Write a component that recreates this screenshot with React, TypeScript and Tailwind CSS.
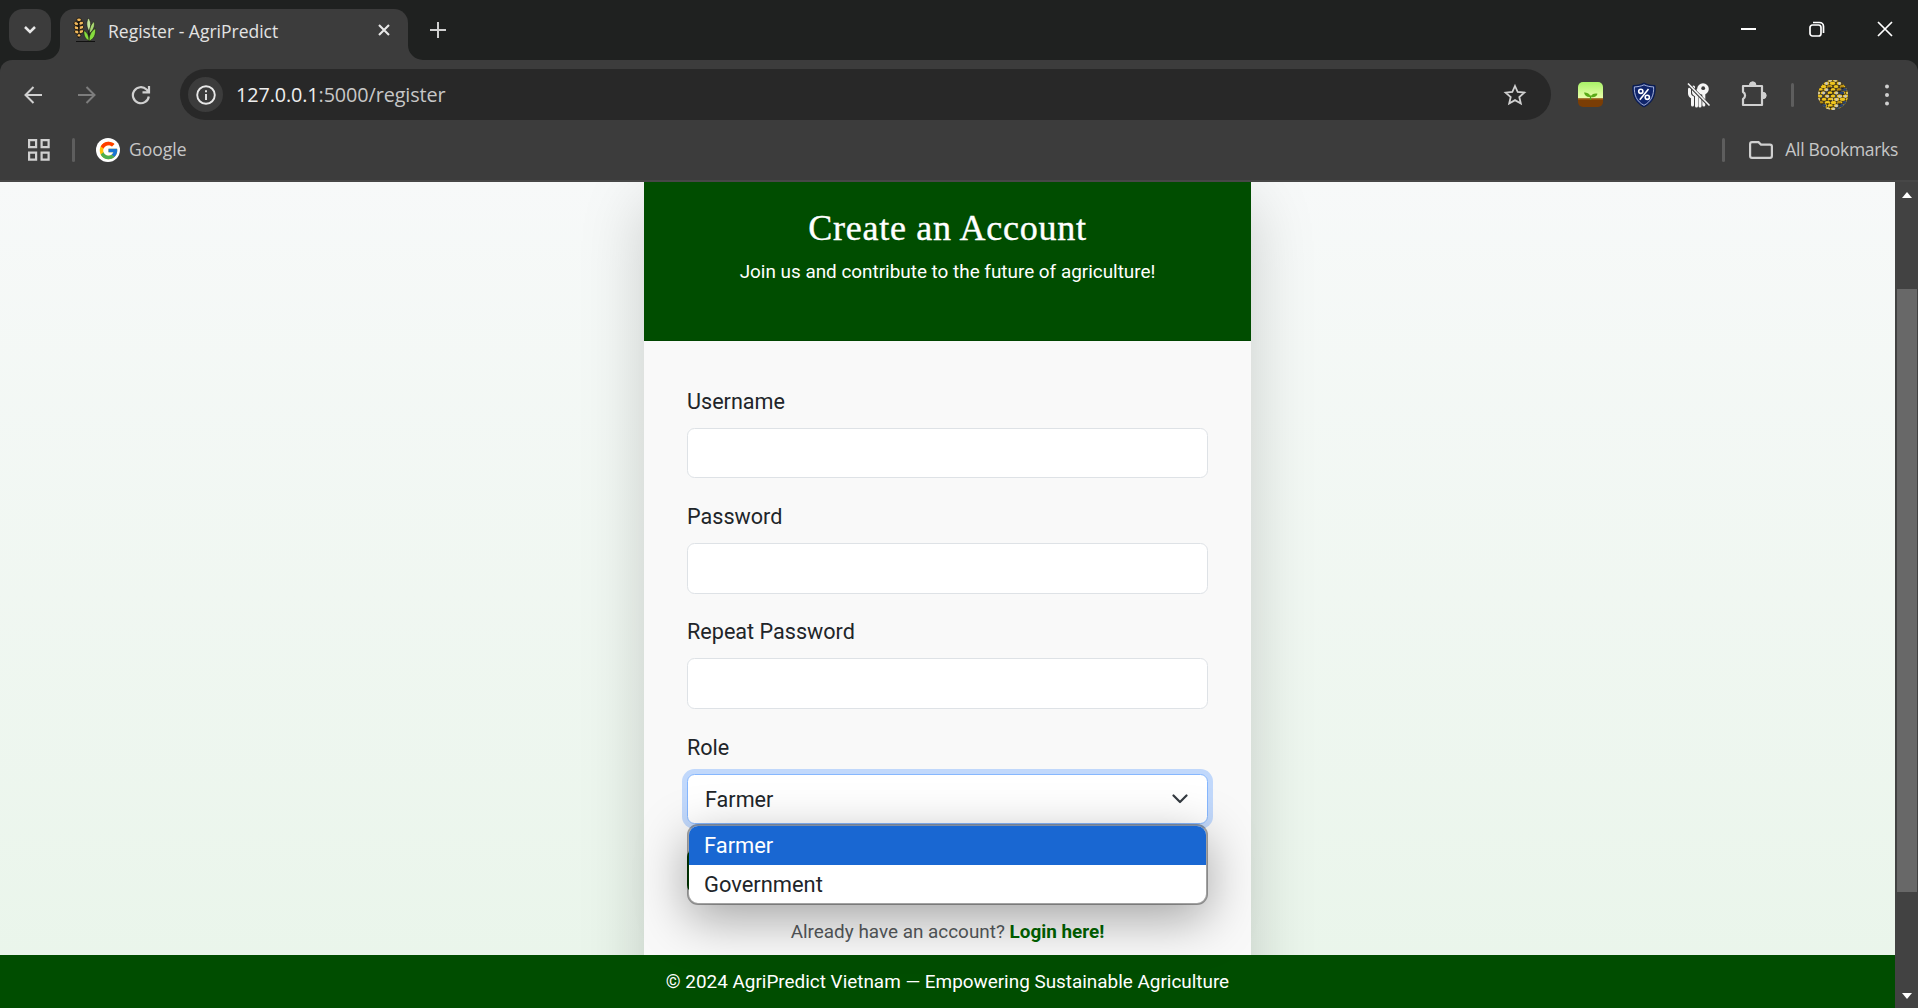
import React from "react";
import { FcGoogle } from "react-icons/fc";

const UI = "font-['Open_Sans','Noto_Sans',sans-serif]";

function Wheat() {
  return (
    <svg width="24" height="26" viewBox="0 0 24 26" className="shrink-0">
      <path d="M5.500 3v18M16 3v20M3 24.500h19" stroke="#111" strokeWidth="1.2" fill="none" />
      <g fill="#f2b95c" stroke="#15120c" strokeWidth="0.800">
        <ellipse cx="6" cy="2.800" rx="2.300" ry="1.800" />
        <ellipse cx="3.200" cy="6.600" rx="2.400" ry="1.800" transform="rotate(25 3.200 6.600)" />
        <ellipse cx="8.200" cy="6.200" rx="2.400" ry="1.800" transform="rotate(-25 8.200 6.200)" />
        <ellipse cx="3.400" cy="10.800" rx="2.400" ry="1.800" transform="rotate(25 3.400 10.800)" />
        <ellipse cx="8.400" cy="10.400" rx="2.400" ry="1.800" transform="rotate(-25 8.400 10.400)" />
        <ellipse cx="3.800" cy="15" rx="2.400" ry="1.800" transform="rotate(25 3.800 15)" />
        <ellipse cx="8.300" cy="14.600" rx="2.400" ry="1.800" transform="rotate(-25 8.300 14.600)" />
        <ellipse cx="6" cy="18.400" rx="1.800" ry="1.700" />
      </g>
      <g stroke="#15120c" strokeWidth="0.500">
        <path d="M15.500 1c3 4 2.500 9 .5 13-2.500-4-3-9-.5-13z" fill="#c4e59a" />
        <path d="M21 4.500c1.500 4.500-1 9-4.500 12 0-4.500 1-9 4.500-12z" fill="#a9d873" />
        <path d="M22.500 11.500c.5 6.500-2 11-6.500 12.500 0-5.500 2-10 6.500-12.500z" fill="#86dc3e" />
        <path d="M11 13.500c3.500 2 5 5.500 5 10-3.500-1-5.500-5-5-10z" fill="#86dc3e" />
      </g>
    </svg>
  );
}

function Sprout() {
  return (
    <svg width="25" height="25" viewBox="0 0 25 25" className="shrink-0">
      <defs>
        <linearGradient id="sky" x1="0" y1="0" x2="0" y2="1">
          <stop offset="0" stopColor="#a9f268" />
          <stop offset="1" stopColor="#ecffae" />
        </linearGradient>
        <clipPath id="tile"><rect width="25" height="25" rx="5" /></clipPath>
      </defs>
      <g clipPath="url(#tile)">
        <rect width="25" height="17" fill="url(#sky)" />
        <rect y="16.500" width="25" height="9" fill="#7a3d05" />
        <rect y="16.500" width="25" height="1.500" fill="#93520f" />
        <path d="M12.500 18c-.2-2 0-3.500.5-4.500" stroke="#4f9e12" strokeWidth="1.400" fill="none" />
        <path d="M12.400 15C9 15.500 6.500 13.500 6 10.500c3 0 6 1 6.400 4.500z" fill="#5aab18" />
        <path d="M13 15c0-2.500 2.500-3.800 6.500-3.300-.6 2.600-3 4-6.500 3.300z" fill="#5aab18" />
      </g>
    </svg>
  );
}

function Shield() {
  return (
    <svg width="26" height="26" viewBox="0 0 26 26" className="shrink-0">
      <path d="M13 1c3.500 1.800 7 2.500 11 2.500C25 13 22 20.500 13 25 4 20.500 1 13 2 3.500 6 3.500 9.500 2.800 13 1z" fill="#10256b" stroke="#0a1c50" strokeWidth="1" />
      <path d="M13 2.800c3 1.400 6 2 9.600 2.100C23 12.800 20.500 19.400 13 23.300 5.500 19.400 3 12.800 3.400 4.900 7 4.800 10 4.200 13 2.800z" fill="none" stroke="#b4bfe0" strokeWidth="0.900" />
      <g fill="none" stroke="#fff" strokeWidth="1.600">
        <circle cx="9.800" cy="9.300" r="2.100" />
        <circle cx="16.300" cy="15.300" r="2.100" />
        <path d="M17.500 7 8.800 17.800" />
      </g>
    </svg>
  );
}

function Honey() {
  return (
    <svg width="24" height="26" viewBox="0 0 24 26" className="shrink-0">
      <circle cx="16" cy="7" r="5.800" fill="#f5f5f5" />
      <g stroke="#f5f5f5" strokeWidth="3" fill="none" strokeLinecap="round">
        <path d="M2.500 7v4.500q0 2.500 3 4v7.500" />
        <path d="M6.500 5v5q0 2 3 3.500V24" />
        <path d="M11 8v4q2 2 2 4v8" />
        <path d="M16.800 12v11" />
      </g>
      <circle cx="16.200" cy="6.200" r="1.900" fill="#3c3c3c" />
      <path d="M2 2.800 22.500 24" stroke="#3c3c3c" strokeWidth="3.200" />
      <path d="M1 1.500 22.500 23.500" stroke="#f5f5f5" strokeWidth="1.600" />
    </svg>
  );
}

const CROWD = Array.from({ length: 90 }, (_, i) => ({
  x: (i * 37 + Math.floor(i / 9) * 5) % 31,
  y: Math.floor(i / 9) * 3.2,
  k: (i * 13 + Math.floor(i / 4) * 5) % 11,
}));

function Avatar() {
  return (
    <svg width="30" height="30" viewBox="0 0 30 30" className="shrink-0">
      <defs><clipPath id="face"><circle cx="15" cy="15" r="15" /></clipPath></defs>
      <g clipPath="url(#face)">
        <rect width="30" height="30" fill="#4a3d1c" />
        {CROWD.map((c, i) => (
          <g key={i}>
            <ellipse cx={c.x} cy={c.y} rx="2.300" ry="1.500" fill={c.k === 2 || c.k === 7 ? "#28406f" : c.k === 5 ? "#b78d12" : "#f0c51c"} />
            {c.k % 4 === 0 && <circle cx={c.x + 0.500} cy={c.y + 0.300} r="1.400" fill="#c9c7c0" />}
            {c.k % 4 === 1 && <rect x={c.x - 1} y={c.y + 1} width="3" height="1.300" fill="#26221a" />}
          </g>
        ))}
      </g>
    </svg>
  );
}

function BrowserChrome() {
  return (
    <header className={`relative z-10 flex h-[182px] shrink-0 flex-col border-b-2 border-[#474747] bg-[#1f2120] ${UI}`}>
      <div className="flex h-[60px] shrink-0 items-start pt-[9px] pl-[9px]">
        <div className="grid size-[42px] place-items-center rounded-[14px] bg-[#3c3c3c]">
          <svg width="14" height="10" viewBox="0 0 14 10"><path d="m2 2 5 5 5-5" fill="none" stroke="#e8e8e8" strokeWidth="2.500" /></svg>
        </div>
        <div className="relative ml-[9px] flex h-[51px] w-[348px] rounded-t-[14px] bg-[#3c3c3c] pl-[13px]">
          <svg className="absolute bottom-0 -left-[15px]" width="15" height="15"><path d="M15 0v15H0A15 15 0 0 0 15 0z" fill="#3c3c3c" /></svg>
          <svg className="absolute -right-[15px] bottom-0" width="15" height="15"><path d="M0 0v15h15A15 15 0 0 1 0 0z" fill="#3c3c3c" /></svg>
          <div className="mt-[8px]"><Wheat /></div>
          <span className="mt-[10px] ml-[11px] w-[239px] text-[17.500px] leading-6 whitespace-nowrap text-[#e3e3e3]">Register - AgriPredict</span>
          <svg className="mt-[14px] ml-[30px] shrink-0" width="14" height="14" viewBox="0 0 14 14"><path d="m2 2 10 10M12 2 2 12" stroke="#e8e8e8" strokeWidth="2.100" /></svg>
        </div>
        <svg className="mt-[13px] ml-[22px]" width="16" height="16"><path d="M8 0v16M0 8h16" stroke="#d0d0d0" strokeWidth="2" /></svg>
        <div className="ml-auto flex items-center pt-[12px] pr-[25px]">
          <svg width="15" height="16"><path d="M0 8h15" stroke="#fff" strokeWidth="2" /></svg>
          <svg className="ml-[53px]" width="16" height="16" fill="none" stroke="#fff" strokeWidth="1.700"><rect x="1" y="4" width="11" height="11" rx="2.500" /><path d="M4 1.500h6.500a4 4 0 0 1 4 4V12" /></svg>
          <svg className="ml-[52px]" width="16" height="16"><path d="m1 1 14 14M15 1 1 15" stroke="#fff" strokeWidth="1.700" /></svg>
        </div>
      </div>

      <div className="flex min-h-0 flex-1 flex-col rounded-t-[12px] bg-[#3c3c3c]">
        <div className="mt-[9px] flex h-[51px] items-center pl-[24px]">
          <svg width="18" height="18" fill="none" stroke="#d0d0d0" strokeWidth="2"><path d="M18 9H2M9.500 1 1.500 9l8 8" /></svg>
          <svg className="ml-[36px]" width="18" height="18" fill="none" stroke="#7d7d7d" strokeWidth="2"><path d="M0 9h16M8.500 1l8 8-8 8" /></svg>
          <svg className="ml-[35px]" width="20" height="20" viewBox="0 0 20 20" fill="none" stroke="#d0d0d0" strokeWidth="2.200"><path d="M17.800 11.500A8 8 0 1 1 15.500 4.500L17.500 6.500M18 1v6.400h-6.500" /></svg>
          <div className="ml-[29px] flex h-full w-[1371px] items-center rounded-full bg-[#282828] pl-[8px]">
            <div className="grid size-[35px] place-items-center rounded-full bg-[#3c3c3c]">
              <svg width="20" height="20" fill="none" stroke="#e8e8e8" strokeWidth="1.900"><circle cx="10" cy="10" r="8.800" /><path d="M10 9v6M10 5.200v2" /></svg>
            </div>
            <span className="ml-[13px] text-[19.800px] leading-7 tracking-[-0.1px] whitespace-nowrap text-[#c7c7c7]"><span className="text-[#eeeeee]">127.0.0.1</span>:5000/register</span>
            <svg className="mr-[24px] ml-auto" width="24" height="24" viewBox="0 0 24 24" fill="none" stroke="#d0d0d0" strokeWidth="1.800"><path d="m12 3 2.700 6 6.600.6-5 4.400 1.500 6.500L12 17.100l-5.800 3.400L7.700 14l-5-4.400 6.600-.6z" /></svg>
          </div>
          <div className="ml-[27px] flex items-center">
            <Sprout />
            <div className="ml-[28px]"><Shield /></div>
            <div className="ml-[30px]"><Honey /></div>
            <svg className="mb-[3px] ml-[28px]" width="28" height="28" viewBox="0 0 28 28"><path d="M4 7h19v19H4v-6a4 4 0 0 0 0-7z" fill="none" stroke="#d0d0d0" strokeWidth="2.200" strokeLinejoin="round" /><path d="M10.500 6a3.200 3.200 0 0 1 6.400 0zM24 13.300a3.200 3.200 0 0 1 0 6.400z" fill="#d0d0d0" stroke="#d0d0d0" /></svg>
            <div className="ml-[24px] h-6 w-[3px] rounded-full bg-[#5e5e5e]" />
            <div className="ml-[24px]"><Avatar /></div>
            <svg className="ml-[37px]" width="4" height="22" fill="#d0d0d0"><circle cx="2" cy="2.500" r="2" /><circle cx="2" cy="11" r="2" /><circle cx="2" cy="19.500" r="2" /></svg>
          </div>
        </div>

        <div className="flex h-[60px] items-center pl-[28px] text-[17.500px] leading-6 text-[#c7c7c7]">
          <svg width="22" height="22" fill="none" stroke="#d0d0d0" strokeWidth="2.200"><path d="M1.100 1.100h7v7h-7zM13.600 1.100h7v7h-7zM1.100 13.600h7v7h-7zM13.600 13.600h7v7h-7z" /></svg>
          <div className="ml-[22px] h-6 w-[3px] rounded-full bg-[#5e5e5e]" />
          <div className="ml-[21px] grid size-6 place-items-center rounded-full bg-white"><FcGoogle size={21} /></div>
          <span className="mb-[2px] ml-[9px]">Google</span>
          <div className="ml-auto h-6 w-[3px] rounded-full bg-[#5e5e5e]" />
          <svg className="ml-[24px]" width="24" height="18" fill="none" stroke="#d0d0d0" strokeWidth="2.200"><path d="M1.100 3V15q0 1.900 1.900 1.900H21q1.900 0 1.900-1.900V5.500q0-1.900-1.900-1.900H12L9.500 1.100H3Q1.100 1.100 1.100 3z" /></svg>
          <span className="mr-[20px] mb-[2px] ml-[12px] tracking-[-0.3px] whitespace-nowrap">All Bookmarks</span>
        </div>
      </div>
    </header>
  );
}

function Field({ label }: { label: string }) {
  return (
    <label className="mb-[22.800px] block">
      <span className="mb-[11px] block text-[21.600px] leading-[31px]">{label}</span>
      <input className="block h-[50.400px] w-full rounded-[7.500px] border border-[#dee2e6] bg-white px-4 outline-none" />
    </label>
  );
}

function RoleSelect() {
  return (
    <div>
      <span className="mb-[11px] block text-[21.600px] leading-[31px]">Role</span>
      <div className="relative text-[21.600px]">
        <div className="flex h-[50.400px] items-center justify-between rounded-[7.500px] border border-[#86b7fe] bg-white pr-[19px] pl-[17px] shadow-[0_0_0_5px_#c1d8fb]">
          <span className="pt-[2px]">Farmer</span>
          <svg width="16" height="10" viewBox="0 0 16 10"><path d="m1.500 1.500 6.500 6.500 6.500-6.500" fill="none" stroke="#343a40" strokeWidth="2.200" strokeLinecap="round" strokeLinejoin="round" /></svg>
        </div>
        <ul className="absolute top-[50px] left-0 z-20 w-full overflow-hidden rounded-[11px] border-2 border-black/35 bg-white bg-clip-padding text-[21.900px] shadow-[0_14px_50px_rgba(0,0,0,0.34)]">
          <li className="h-[39px] bg-[#1967d2] pl-[15px] leading-[39px] text-white">Farmer</li>
          <li className="h-[38px] pl-[15px] leading-[40px]">Government</li>
        </ul>
      </div>
      <button className="mt-[25px] block h-11 w-[518px] rounded-[8px] bg-[#004d00] text-white">Register</button>
    </div>
  );
}

export default function App() {
  return (
    <div className="flex h-[1008px] w-[1918px] flex-col overflow-hidden font-[Roboto,sans-serif] text-[20px] text-[#212529]">
      <BrowserChrome />
      <div className="flex min-h-0 flex-1">
        <div className="flex w-[1895px] flex-col bg-linear-to-b from-[#f7f9f9] to-[#e9f5ea]">
          <main className="flex min-h-0 flex-1 items-start justify-center">
            <section className="h-[860px] w-[607px] bg-[#f9f9f9] shadow-[0_20px_60px_rgba(0,0,0,0.175)]">
              <div className="flex h-[159px] flex-col items-center border-b border-[#004500] bg-[#004d00] pt-[25px] text-center text-white">
                <h1 className="font-['Liberation_Serif',serif] text-[36px] leading-[42px] tracking-[0.75px] [-webkit-text-stroke:0.4px_white]">Create an Account</h1>
                <p className="mt-[8px] text-[18.900px] leading-[30px]">Join us and contribute to the future of agriculture!</p>
              </div>
              <div className="px-[43px] pt-[45px]">
                <Field label="Username" />
                <Field label="Password" />
                <Field label="Repeat Password" />
                <RoleSelect />
                <p className="mt-[25px] text-center text-[18.900px] leading-[28px] text-[#55595c]">
                  Already have an account? <a className="font-bold text-[#006400]">Login here!</a>
                </p>
              </div>
            </section>
          </main>
          <footer className="relative z-10 h-[53px] shrink-0 bg-[#004d00] pt-[13px] text-center text-[18.900px] leading-[28px] text-white">
            © 2024 AgriPredict Vietnam — Empowering Sustainable Agriculture
          </footer>
        </div>
        <div className="flex w-[23px] flex-col items-center bg-[#424242] pt-[10px] pb-[9px]">
          <svg width="10" height="6" className="ml-px"><path d="M5 0l5 6H0z" fill="#fff" /></svg>
          <div className="mt-[91px] h-[603px] w-5 bg-[#686868]" />
          <svg width="10" height="6" className="mt-auto ml-px"><path d="M5 6l5-6H0z" fill="#fff" /></svg>
        </div>
      </div>
    </div>
  );
}
